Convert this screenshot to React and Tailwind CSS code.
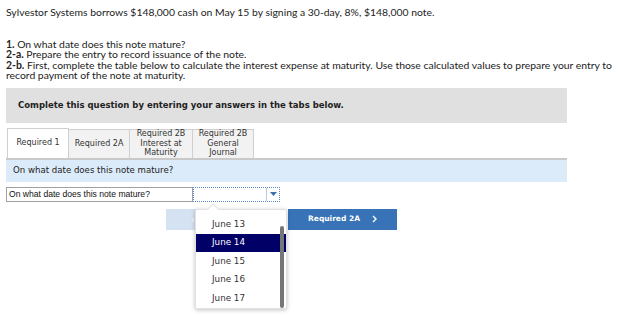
import { useState } from 'react';

const dates = ['June 13', 'June 14', 'June 15', 'June 16', 'June 17'];

const tabs = [
  { id: 'req1', lines: ['Required 1'], w: 'w-[62px]' },
  { id: 'req2a', lines: ['Required 2A'], w: 'w-[62px]' },
  { id: 'req2b1', lines: ['Required 2B', 'Interest at', 'Maturity'], w: 'w-[64px]' },
  { id: 'req2b2', lines: ['Required 2B', 'General', 'Journal'], w: 'w-[62px]' },
];

export default function App() {
  const [active, setActive] = useState('req1');
  const [selected, setSelected] = useState('June 14');

  return (
    <div className="relative w-[624px] h-[315px] overflow-hidden bg-white text-[#333]">
      {/* Question text */}
      <div className="px-[6px] pt-[7px] [font-family:'Lato','Liberation_Sans',sans-serif] text-[10.4px] leading-[10.5px] text-[#222] whitespace-nowrap">
        <p>Sylvestor Systems borrows $148,000 cash on May 15 by signing a 30-day, 8%, $148,000 note.</p>
        <div className="mt-[21px]">
          <p><b>1.</b> On what date does this note mature?</p>
          <p><b>2-a.</b> Prepare the entry to record issuance of the note.</p>
          <p><b>2-b.</b> First, complete the table below to calculate the interest expense at maturity. Use those calculated values to prepare your entry to</p>
          <p>record payment of the note at maturity.</p>
        </div>
      </div>

      <div className="ml-[6px] w-[561px] [font-family:'DejaVu_Sans',Verdana,sans-serif]">
        {/* Instructions */}
        <div className="mt-[7px] h-[35px] bg-[#e0e0e0] flex items-center pl-[12px] text-[8.5px] font-bold text-[#222]">
          Complete this question by entering your answers in the tabs below.
        </div>

        {/* Tabs */}
        <div className="mt-[5px] flex items-end h-[30px] pl-[1px]">
          {tabs.map((t) => (
            <button
              key={t.id}
              onClick={() => setActive(t.id)}
              className={`${t.w} flex flex-col items-center justify-center text-[8px] leading-[9.5px] text-[#333] border border-[#cfcfcf] border-b-0 -mr-px ${
                active === t.id ? 'h-[30px] bg-white' : 'h-[29px] bg-[#f2f2f2]'
              }`}
            >
              {t.lines.map((l) => (
                <span key={l}>{l}</span>
              ))}
            </button>
          ))}
        </div>

        {/* Question panel */}
        <div className="h-[24px] bg-[#dcebf9] border-t-2 border-[#c9c9c9] flex items-center pl-[7px] text-[8.6px] text-[#222]">
          On what date does this note mature?
        </div>

        {/* Answer row */}
        <div className="mt-[5px] flex h-[15px]">
          <div className="w-[187px] border border-[#a0a0a0] flex items-center pl-[2px] [font-family:'Liberation_Sans',Arial,sans-serif] text-[8.6px] text-[#111]">
            On what date does this note mature?
          </div>
          <div className="w-[87px] border border-dotted border-[#5a8ac8] flex justify-end">
            <div className="w-[13px] border-l border-[#b7c9df] flex items-center justify-center">
              <svg width="7" height="4" viewBox="0 0 7 4">
                <path d="M0 0 L7 0 L3.5 4 Z" fill="#3a6fb0" />
              </svg>
            </div>
          </div>
        </div>

        {/* Nav buttons */}
        <div className="mt-[7px] flex gap-[4px] pl-[160px]">
          <button className="w-[118px] h-[21px] bg-[#d5e2f1] flex items-center pl-[25px] text-white text-[10px]">
            ‹
          </button>
          <button className="w-[109px] h-[21px] bg-[#3873b8] flex items-center justify-center gap-[12px] text-white text-[7.5px] font-bold">
            <span>Required 2A</span>
            <svg width="5" height="8" viewBox="0 0 5 8">
              <path d="M1 1 L4 4 L1 7" stroke="white" strokeWidth="1.4" fill="none" />
            </svg>
          </button>
        </div>
      </div>

      {/* Dropdown list */}
      <div className="absolute left-[195px] top-[209px] w-[92px] h-[100px] bg-white border border-[#e2e2e2] shadow-[0_1px_4px_rgba(0,0,0,0.25)] rounded-[2px] [font-family:'DejaVu_Sans',Verdana,sans-serif]">
        <div className="absolute -top-[5px] left-[13px] w-[8px] h-[8px] bg-white border-l border-t border-[#e2e2e2] rotate-45" />
        <ul className="relative pt-[5px]">
          {dates.map((d) => (
            <li
              key={d}
              onClick={() => setSelected(d)}
              className={`h-[18.5px] flex items-center pl-[16px] text-[8.75px] cursor-pointer ${
                selected === d ? 'bg-[#000066] text-white' : 'text-[#333]'
              }`}
            >
              {d}
            </li>
          ))}
        </ul>
        <div className="absolute right-[2px] top-[16px] bottom-[0px] w-[4px] rounded-full bg-[#767676]" />
      </div>
    </div>
  );
}
